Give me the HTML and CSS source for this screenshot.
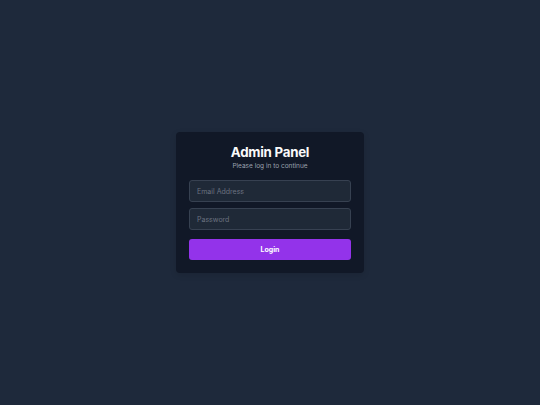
FILE: index.html
```html
<!DOCTYPE html>
<html>
<head>
<meta charset="utf-8">
<link rel="stylesheet" href="styles.css">
</head>
<body>
<main class="page">
  <form class="card">
    <h1 class="title">Admin Panel</h1>
    <p class="subtitle">Please log in to continue</p>
    <input class="field field-first" type="email" placeholder="Email Address">
    <input class="field" type="password" placeholder="Password">
    <button class="btn" type="button">Login</button>
  </form>
</main>
</body>
</html>
```

FILE: styles.css
```css
html, body {
  margin: 0;
  padding: 0;
  height: 100%;
}
body {
  background: #1e293b;
  font-family: Inter, "Noto Sans", sans-serif;
}
.page {
  height: 405px;
  display: flex;
  align-items: flex-start;
  justify-content: center;
  padding-top: 132px;
  box-sizing: border-box;
}
.card {
  width: 188px;
  box-sizing: border-box;
  background: #111827;
  border-radius: 4px;
  padding: 12px 13px 13px;
  display: flex;
  flex-direction: column;
  box-shadow: 0 2px 6px rgba(0,0,0,0.12);
}
.title {
  margin: 0;
  text-align: center;
  color: #f9fafb;
  font-size: 13.3px;
  font-weight: 700;
  letter-spacing: -0.25px;
  line-height: 16px;
}
.subtitle {
  margin: 2px 0 0;
  text-align: center;
  color: #9ca3af;
  font-size: 6.5px;
  line-height: 9px;
}
.field {
  margin-top: 6px;
  height: 22px;
  box-sizing: border-box;
  background: #1f2937;
  border: 1px solid #374151;
  border-radius: 3px;
  padding: 0 7px;
  font-family: inherit;
  font-size: 7px;
  color: #e5e7eb;
  outline: none;
}
.field-first {
  margin-top: 9px;
}
.field::placeholder {
  color: #6b7280;
}
.btn {
  margin-top: 9px;
  height: 21px;
  border: 0;
  border-radius: 3px;
  background: #9333ea;
  color: #ffffff;
  font-family: inherit;
  font-size: 7px;
  font-weight: 700;
}
```
